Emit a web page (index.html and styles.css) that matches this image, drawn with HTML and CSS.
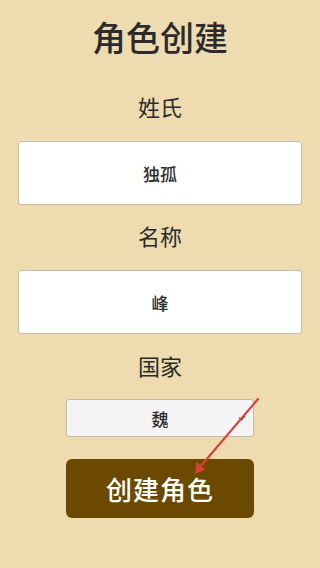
FILE: index.html
```html
<!DOCTYPE html>
<html lang="zh-CN">
<head>
	<meta charset="utf-8">
	<meta name="viewport" content="width=device-width, initial-scale=1.0">
	<title>角色创建</title>
	<link rel="stylesheet" href="styles.css">
</head>
<body>
<div class="wrap">
	<h1 class="title">角色创建</h1>
	<form class="form">
		<label class="label label_first" for="surname">姓氏</label>
		<input class="field" id="surname" type="text" value="独孤">
		<label class="label" for="name">名称</label>
		<input class="field" id="name" type="text" value="峰">
		<label class="label label_last" for="country">国家</label>
		<div class="select_box">
			<select class="select" id="country">
				<option>魏</option>
				<option>蜀</option>
				<option>吴</option>
			</select>
			<svg class="select_arrow" width="8" height="6" viewBox="0 0 8 6"><path d="M1 2.5 L3.5 5 L7 1" fill="none" stroke="#666" stroke-width="1.2"/></svg>
		</div>
		<button class="btn" type="button">创建角色</button>
	</form>
	<svg class="pointer" width="320" height="568" viewBox="0 0 320 568">
		<line x1="258" y1="399" x2="200" y2="467" stroke="#d9403a" stroke-width="2.2" stroke-linecap="round"/>
		<path d="M195 474 L196.5 462 L205.5 469.5 Z" fill="#d9403a"/>
	</svg>
</div>
</body>
</html>
```

FILE: styles.css
```css
*	{margin:0;padding:0;box-sizing:border-box;}
body	{font-family:"Noto Sans CJK SC", "Noto Sans", sans-serif;color:#2b2b2b;background-color:#eedcb0;}
.wrap	{position:relative;min-height:568px;padding:15px 18px 0;text-align:center;}
.wrap .title	{font-size:34px;line-height:44px;font-weight:500;color:#2b2b2b;}
.form	{display:flex;flex-direction:column;align-items:center;}
.form .label	{display:block;margin-top:15px;font-size:22px;line-height:30px;color:#2b2b2b;}
.form .label_first	{margin-top:32px;}
.form .label_last	{margin-top:16px;}
.form .field	{display:block;width:100%;height:64px;margin-top:20px;border:1px solid #c3bba6;border-radius:3px;background:#fff;font-family:inherit;font-size:17px;font-weight:500;color:#2b2b2b;text-align:center;}
.select_box	{position:relative;width:188px;height:38px;margin-top:19px;}
.select_box .select	{width:100%;height:100%;border:1px solid #c3bba6;border-radius:3px;background:#f5f5f5;font-family:inherit;font-size:17px;font-weight:500;color:#2b2b2b;text-align:center;text-align-last:center;appearance:none;-webkit-appearance:none;}
.select_box .select_arrow	{position:absolute;right:8px;top:16px;}
.form .btn	{width:188px;height:59px;margin-top:22px;border:0;border-radius:6px;background-color:#6b4a00;font-family:inherit;font-size:26px;font-weight:500;color:#fff;letter-spacing:1px;}
.pointer	{position:absolute;left:0;top:0;pointer-events:none;}
```
